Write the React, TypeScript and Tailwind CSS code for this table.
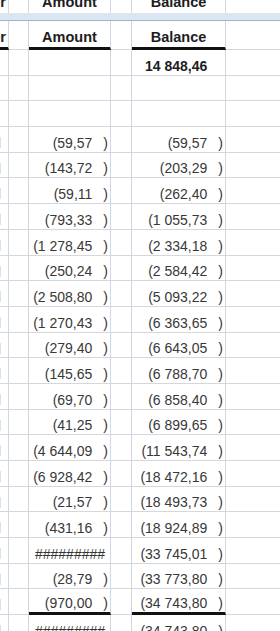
import React from "react";

type Row = {
  amount?: string;
  balance?: string;
  bold?: boolean;
  under?: boolean;
  mark?: boolean;
};

const ROWS: Row[] = [
  { balance: "14 848,46", bold: true },
  {},
  {},
  { amount: "(59,57", balance: "(59,57", mark: true },
  { amount: "(143,72", balance: "(203,29", mark: true },
  { amount: "(59,11", balance: "(262,40", mark: true },
  { amount: "(793,33", balance: "(1 055,73", mark: true },
  { amount: "(1 278,45", balance: "(2 334,18", mark: true },
  { amount: "(250,24", balance: "(2 584,42", mark: true },
  { amount: "(2 508,80", balance: "(5 093,22", mark: true },
  { amount: "(1 270,43", balance: "(6 363,65", mark: true },
  { amount: "(279,40", balance: "(6 643,05", mark: true },
  { amount: "(145,65", balance: "(6 788,70", mark: true },
  { amount: "(69,70", balance: "(6 858,40", mark: true },
  { amount: "(41,25", balance: "(6 899,65", mark: true },
  { amount: "(4 644,09", balance: "(11 543,74", mark: true },
  { amount: "(6 928,42", balance: "(18 472,16", mark: true },
  { amount: "(21,57", balance: "(18 493,73", mark: true },
  { amount: "(431,16", balance: "(18 924,89", mark: true },
  { amount: "#########", balance: "(33 745,01", mark: true },
  { amount: "(28,79", balance: "(33 773,80", mark: true },
  { amount: "(970,00", balance: "(34 743,80", mark: true, under: true },
  { amount: "#########", balance: "(34 743,80", mark: true },
];

const grid = "border-[#d4d7e0]";

function Cell({
  w,
  under,
  last,
  className,
  children,
}: {
  w?: string;
  under?: boolean;
  last?: boolean;
  className?: string;
  children?: React.ReactNode;
}) {
  return (
    <div
      className={[
        "h-full overflow-hidden",
        grid,
        w ?? "flex-1",
        last ? "" : "border-r",
        under ? "border-b-[3px] border-b-[#111]" : "border-b",
        className ?? "",
      ].join(" ")}
    >
      {children}
    </div>
  );
}

function Num({ value, bold }: { value?: string; bold?: boolean }) {
  if (!value) return null;
  if (value.startsWith("#")) {
    return (
      <div className="flex h-full items-end justify-center pb-[1px] pl-[1px] text-[#333]">
        <span>{value}</span>
      </div>
    );
  }
  const paren = value.startsWith("(");
  return (
    <div
      className={
        "flex h-full items-end justify-end pb-[1px] pr-[2px] " +
        (bold ? "font-bold text-[#1d1d1d]" : "text-[#383838]")
      }
    >
      <span className="whitespace-nowrap">{value}</span>
      <span className={paren ? "ml-[11px]" : "ml-[11px] invisible"}>)</span>
    </div>
  );
}

function HeaderCells({ top }: { top?: boolean }) {
  const label =
    "flex h-full items-end justify-center pb-[2px] font-bold text-[14.5px] text-[#1d1d1d]";
  return (
    <>
      <Cell w="w-[9px]" under={!top}>
        <div className="flex h-full items-end justify-end pb-[2px] pr-[2px] font-bold text-[14.5px] text-[#1d1d1d]">
          <span className="whitespace-nowrap">Number</span>
        </div>
      </Cell>
      <Cell w="w-[20px]" />
      <Cell w="w-[82px]" under={!top}>
        <div className={label}>Amount</div>
      </Cell>
      <Cell w="w-[21px]" />
      <Cell w="w-[94px]" under={!top}>
        <div className={label}>Balance</div>
      </Cell>
      <Cell last />
    </>
  );
}

export default function App() {
  return (
    <div className="w-[280px] h-[631px] overflow-hidden bg-white font-['Liberation_Sans',Arial,sans-serif] text-[14px] leading-[16px]">
      {/* row scrolled under the frozen pane */}
      <div className="flex h-[13px] [&>div]:border-b-0 [&>div>div]:pb-[3.5px]">
        <HeaderCells top />
      </div>
      <div className="h-[8px] bg-[#dce6f3] border-b border-[#9fb2cc]" />
      <div className="flex h-[29px]">
        <HeaderCells />
      </div>

      {ROWS.map((r, i) => (
        <div key={i} className="flex h-[25.7px]">
          <Cell w="w-[9px]">
            {r.mark && <div className="mt-[10px] h-[11px] w-px bg-[#cfe5ef]" />}
          </Cell>
          <Cell w="w-[20px]" />
          <Cell w="w-[82px]" under={r.under}>
            <Num value={r.amount} />
          </Cell>
          <Cell w="w-[21px]" />
          <Cell w="w-[94px]" under={r.under}>
            <Num value={r.balance} bold={r.bold} />
          </Cell>
          <Cell last />
        </div>
      ))}
    </div>
  );
}
